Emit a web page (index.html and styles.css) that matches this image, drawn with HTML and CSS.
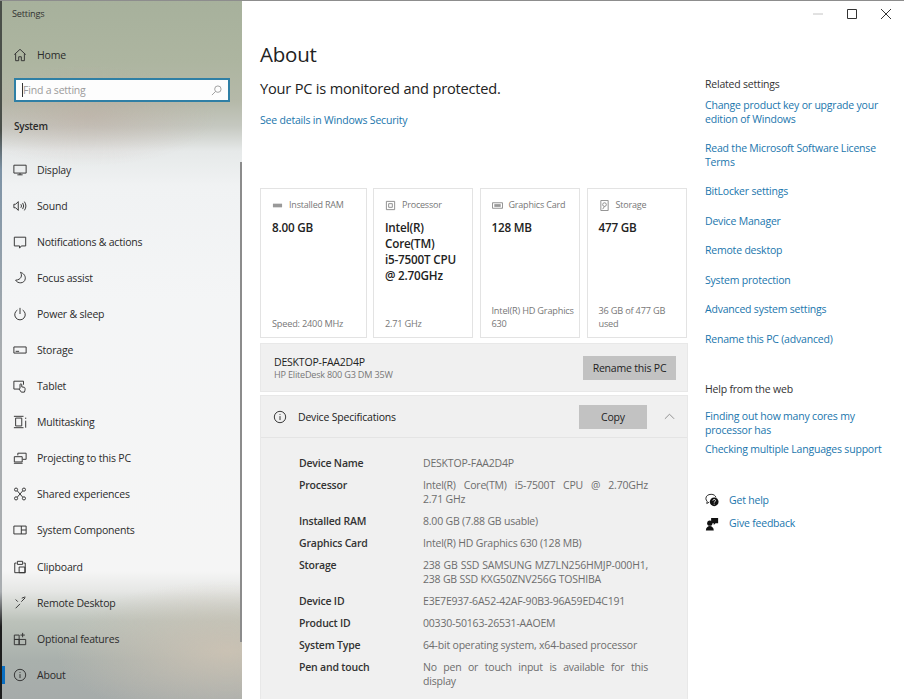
FILE: index.html

```html
<!DOCTYPE html>
<html lang="en">
<head>
  <meta charset="UTF-8" />
  <title>Settings - About</title>
  <link rel="stylesheet" href="styles.css">
</head>
<body>
  <div class="window">
    <aside class="sidebar">
      <div class="app-title">Settings</div>
      <a class="home">
        <svg class="icon" viewBox="0 0 16 16"><path d="M1.500 7.500 8 1.500l6.500 6M3 6.500v8h3.500v-4.500h3v4.500H13v-8"/></svg>
        <span>Home</span>
      </a>
      <div class="search">
        <span class="caret"></span><span class="search-text">Find a setting</span>
        <svg class="search-icon" viewBox="0 0 12 12"><circle cx="7.500" cy="4.500" r="3.500"/><path d="M5 7 1 11"/></svg>
      </div>
      <div class="section">System</div>
      <nav class="nav">
        <a class="nav-item"><svg class="icon" viewBox="0 0 16 16"><path d="M1 2.500h14v9H1zM5 13.500h6M8 11.500v2" /></svg><span>Display</span></a>
        <a class="nav-item"><svg class="icon" viewBox="0 0 16 16"><path d="M1 6v4h2l3 3V3L3 6zM9 6q1.500 2 0 4M11 4.500q2.500 3.500 0 7M13 3q3.500 5 0 10"/></svg><span>Sound</span></a>
        <a class="nav-item"><svg class="icon" viewBox="0 0 16 16"><path d="M1.500 2.500h13v10H9.500L7.500 15v-2.500h-6z"/></svg><span>Notifications &amp; actions</span></a>
        <a class="nav-item"><svg class="icon" viewBox="0 0 16 16"><path d="M8.500 1.500C11 5 9.500 10 3 10.500c2 4 10 4.500 11-1.500.500-3.500-2-6.500-5.500-7.500z"/></svg><span>Focus assist</span></a>
        <a class="nav-item"><svg class="icon" viewBox="0 0 16 16"><path d="M5 3.500a6 6 0 1 0 6 0M8 1v7"/></svg><span>Power &amp; sleep</span></a>
        <a class="nav-item"><svg class="icon" viewBox="0 0 16 16"><path d="M1 4.500h14v7H1zM3 9.500h4"/></svg><span>Storage</span></a>
        <a class="nav-item"><svg class="icon" viewBox="0 0 16 16"><path d="M7 11.500H1v-9h11v4"/><path d="M8 8V6.500a1 1 0 0 1 2 0V9l3 .5c1 .5 1 2.500.5 4l-.5 1.500H9.500L7 11.500 8 10.500z"/></svg><span>Tablet</span></a>
        <a class="nav-item"><svg class="icon" viewBox="0 0 16 16"><path d="M3 3.500h7v9H3zM1 1.500h11M1 14.500h11M14.500 3v1.500M14.500 6.500v8"/></svg><span>Multitasking</span></a>
        <a class="nav-item"><svg class="icon" viewBox="0 0 16 16"><path d="M5.500 5V2.500h9.500v7h-4"/><path d="M1.500 6.500h9v6h-9zM1 14h10"/></svg><span>Projecting to this PC</span></a>
        <a class="nav-item"><svg class="icon" viewBox="0 0 16 16"><circle cx="3.500" cy="3" r="1.800"/><circle cx="12.500" cy="3" r="1.800"/><circle cx="3.500" cy="13" r="1.800"/><circle cx="12.500" cy="13" r="1.800"/><path d="M5 4.500 11 11.500M11 4.500 5 11.500"/></svg><span>Shared experiences</span></a>
        <a class="nav-item"><svg class="icon" viewBox="0 0 16 16"><path d="M1 3.500h14v9H1zM9.500 3.500v9M9.500 8H15"/></svg><span>System Components</span></a>
        <a class="nav-item"><svg class="icon" viewBox="0 0 16 16"><path d="M4 3.500H2v11h12v-11h-2M7 8h6.500v6.500H7zM5 5V1.500h6V5z"/></svg><span>Clipboard</span></a>
        <a class="nav-item"><svg class="icon" viewBox="0 0 16 16"><path d="M3 14l5-5M9.500 6.500 14 2M10 2.500 14 1M3 4l2.500 2.500"/></svg><span>Remote Desktop</span></a>
        <a class="nav-item"><svg class="icon" viewBox="0 0 16 16"><path d="M1.500 3.500h5.500v5H1.500zM1.500 8.500h5.500v6H1.500zM7 8.500h7.500v6H7zM11 1v5M8.500 3.500h5"/></svg><span>Optional features</span></a>
        <a class="nav-item active"><svg class="icon" viewBox="0 0 16 16"><circle cx="8" cy="8" r="6.500"/><path d="M8 7v4.500M8 4.500v1"/></svg><span>About</span></a>
      </nav>
      <div class="scrollbar"></div>
    </aside>

    <main class="main">
      <div class="controls">
        <svg class="minimize" viewBox="0 0 10 10"><path d="M0 5h10"/></svg>
        <svg viewBox="0 0 10 10"><path d="M.5.5h9v9h-9z"/></svg>
        <svg viewBox="0 0 10 10"><path d="M0 0l10 10M10 0 0 10"/></svg>
      </div>
      <div class="columns">
        <section class="content">
          <h1>About</h1>
          <h2>Your PC is monitored and protected.</h2>
          <a class="link security">See details in Windows Security</a>

          <div class="cards">
            <div class="card c1">
              <div class="card-head"><svg viewBox="0 0 12 12"><path class="fill" d="M1 4h10v4H1z"/></svg>Installed RAM</div>
              <div class="card-value">8.00 GB</div>
              <div class="card-foot">Speed: 2400 MHz</div>
            </div>
            <div class="card c2">
              <div class="card-head"><svg viewBox="0 0 12 12"><path d="M1.500 1.500h9v9h-9zM4 4h4v4H4z"/></svg>Processor</div>
              <div class="card-value"><div>Intel(R)</div><div>Core(TM)</div><div>i5-7500T CPU</div><div>@ 2.70GHz</div></div>
              <div class="card-foot">2.71 GHz</div>
            </div>
            <div class="card c3">
              <div class="card-head"><svg viewBox="0 0 12 12"><path d="M.5 3h11v6H.5z"/><path class="fill" d="M2.500 4.500h7v3h-7z"/></svg>Graphics Card</div>
              <div class="card-value">128 MB</div>
              <div class="card-foot">Intel(R) HD Graphics 630</div>
            </div>
            <div class="card c4">
              <div class="card-head"><svg viewBox="0 0 12 12"><path d="M2 .5h8v11H2z"/><circle cx="6" cy="5" r="2"/><path d="M4 10l2-3"/></svg>Storage</div>
              <div class="card-value">477 GB</div>
              <div class="card-foot">36 GB of 477 GB used</div>
            </div>
          </div>

          <div class="pc-bar">
            <div>
              <div class="pc-name">DESKTOP-FAA2D4P</div>
              <div class="pc-model">HP EliteDesk 800 G3 DM 35W</div>
            </div>
            <button class="btn rename">Rename this PC</button>
          </div>

          <div class="specs">
            <div class="specs-head">
              <svg class="info" viewBox="0 0 16 16"><circle cx="8" cy="8" r="6.500"/><path d="M8 7v4.500M8 4.500v1"/></svg>
              <span class="specs-title">Device Specifications</span>
              <button class="btn copy">Copy</button>
              <svg class="chevron" viewBox="0 0 12 7"><path d="M1 6l5-5 5 5"/></svg>
            </div>
            <dl class="spec-list">
              <dt>Device Name</dt><dd>DESKTOP-FAA2D4P</dd>
              <dt>Processor</dt><dd><span class="just-line">Intel(R) Core(TM) i5-7500T CPU @ 2.70GHz</span>2.71 GHz</dd>
              <dt>Installed RAM</dt><dd>8.00 GB (7.88 GB usable)</dd>
              <dt>Graphics Card</dt><dd>Intel(R) HD Graphics 630 (128 MB)</dd>
              <dt>Storage</dt><dd class="just">238 GB SSD SAMSUNG MZ7LN256HMJP-000H1, 238 GB SSD KXG50ZNV256G TOSHIBA</dd>
              <dt>Device ID</dt><dd>E3E7E937-6A52-42AF-90B3-96A59ED4C191</dd>
              <dt>Product ID</dt><dd>00330-50163-26531-AAOEM</dd>
              <dt>System Type</dt><dd>64-bit operating system, x64-based processor</dd>
              <dt>Pen and touch</dt><dd class="just">No pen or touch input is available for this display</dd>
            </dl>
          </div>
        </section>

        <aside class="related">
          <h3>Related settings</h3>
          <div class="rel-group">
            <a class="link">Change product key or upgrade your edition of Windows</a>
            <a class="link">Read the Microsoft Software License Terms</a>
            <a class="link">BitLocker settings</a>
            <a class="link">Device Manager</a>
            <a class="link">Remote desktop</a>
            <a class="link">System protection</a>
            <a class="link">Advanced system settings</a>
            <a class="link">Rename this PC (advanced)</a>
          </div>
          <h3 class="web">Help from the web</h3>
          <div class="rel-group web-group">
            <a class="link">Finding out how many cores my processor has</a>
            <a class="link">Checking multiple Languages support</a>
          </div>
          <div class="help">
            <a class="link help-row">
              <svg viewBox="0 0 16 16"><path d="M7 1.500c-3.500 0-6 2-6 4.800 0 1.300.6 2.400 1.500 3.200L2 12l2.800-1.500"/><path d="M7 1.500c3 0 5 1.500 5.500 3.500"/><circle class="fill" cx="10.500" cy="10" r="5"/><path class="mark" d="M9 8.800c0-2 3-2 3 0 0 1-1.500 1-1.500 2.200M10.500 12.200v1"/></svg>
              Get help
            </a>
            <a class="link help-row">
              <svg viewBox="0 0 16 16"><circle class="fill" cx="5.500" cy="7" r="3"/><path class="fill" d="M1 15.500c0-7 9-7 9 0z"/><path class="fill" d="M7 1h8v6h-3l-2 2V7H7z"/></svg>
              Give feedback
            </a>
          </div>
        </aside>
      </div>
    </main>
  </div>
</body>
</html>
```

FILE: styles.css

```css
* { box-sizing: border-box; }
html, body { margin: 0; padding: 0; height: 100%; overflow: hidden; }
body { font-family: "Open Sans", "Noto Sans", Arial, sans-serif; font-size: 10.5px; letter-spacing: -0.2px; color: #222; background: #fff; }
.window { display: flex; width: 904px; height: 699px; border-top: 1px solid #8d8d8d; overflow: hidden; }

/* sidebar */
.sidebar {
  position: relative; width: 242px; flex: none; border-left: 2px solid; color: #2b2b2b;
  border-image: linear-gradient(180deg, #4a4f49 0, #4a4f49 130px, #7d93a6 170px, #a9adb0 350px, #a9adb0 590px, #1d1d1d 625px, #1d1d1d 100%) 1;
  background:
    radial-gradient(ellipse 130px 50px at 85px 115px, rgba(190,165,155,0.4), rgba(190,165,155,0) 100%),
    radial-gradient(ellipse 170px 70px at 225px 650px, rgba(205,195,180,0.9), rgba(205,195,180,0) 100%),
    linear-gradient(180deg, #a7b19c 0, #adb5a0 60px, #b5b9a9 100px, #c5c8c0 125px, #e6e9e9 150px, #f0f2f3 185px, #f4f5f6 300px, #f5f5f5 570px, #e6e7e5 590px, #bcc2ba 620px, #a9b0ac 660px, #a6abaa 699px);
}
.app-title { padding: 7px 0 0 10px; font-size: 9.2px; line-height: 12px; height: 44px; color: #333; }
.home { display: flex; align-items: center; gap: 10px; height: 20px; padding-left: 11px; }
.icon { width: 14px; height: 14px; flex: none; fill: none; stroke: #333; stroke-width: 1.1; }
.search { display: flex; align-items: center; height: 24px; margin: 13px 0 0 12px; width: 216px; border: 2px solid #2f7fa5; background: #fdfdfd; padding: 0 6px; color: #9b9b9b; }
.caret { width: 1px; height: 14px; background: #333; }
.search-text { flex: 1; }
.search-icon { width: 11px; height: 11px; fill: none; stroke: #999; }
.section { margin: 16px 0 0 12px; font-size: 10px; font-weight: 600; line-height: 16px; height: 16px; }
.nav { margin-top: 17.5px; }
.nav-item { display: flex; align-items: center; gap: 10px; height: 36.1px; padding-left: 11px; position: relative; }
.nav-item.active::before { content: ""; position: absolute; left: 0; top: 9px; width: 3px; height: 18px; background: #0a6fc2; }
.scrollbar { position: absolute; top: 161px; right: 0; width: 2px; height: 480px; background: #8c8c8c; }

/* main */
.main { flex: 1; min-width: 0; }
.controls { display: flex; justify-content: flex-end; align-items: center; gap: 24px; height: 25px; padding-right: 13px; }
.controls svg { width: 10px; height: 10px; fill: none; stroke: #333; stroke-width: 1; }
.controls .minimize { stroke: #c4c4c4; }
.columns { display: flex; }
.content { width: 428px; margin-left: 18px; flex: none; }
h1 { margin: 13px 0 0; font-size: 20.5px; font-weight: 400; line-height: 30px; color: #222; }
h2 { margin: 7px 0 0; font-size: 14.6px; font-weight: 400; line-height: 24px; color: #222; }
.link { color: #1a76ad; display: block; }
.security { margin-top: 12px; line-height: 16px; }

.cards { display: flex; gap: 6.5px; margin-top: 60px; }
.card { height: 150px; background: #fff; border: 1px solid #e3e3e3; padding: 9px 2px 7px 11px; display: flex; flex-direction: column; }
.c1 { width: 106.5px; }
.c2 { width: 100px; }
.c3 { width: 100.5px; }
.c4 { width: 100.5px; padding-right: 6px; }
.card-head { display: flex; align-items: center; gap: 5px; color: #777; font-size: 9px; line-height: 14px; }
.card-head svg { width: 11px; height: 11px; flex: none; fill: none; stroke: #888; margin-right: 1px; }
.card-head .fill { fill: #999; stroke: none; }
.card-value { margin-top: 7px; font-size: 11.7px; font-weight: 600; line-height: 16px; color: #222; flex: 1; }
.card-foot { color: #777; font-size: 9.2px; line-height: 12.5px; }

.pc-bar { display: flex; justify-content: space-between; align-items: center; height: 49px; margin-top: 5px; background: #f0f0f0; border: 1px solid #e8e8e8; padding: 0 11px 0 13px; }
.pc-name { font-size: 10.5px; line-height: 14px; color: #222; }
.pc-model { font-size: 9.1px; line-height: 12px; color: #777; }
.btn { border: 0; background: #c2c2c2; color: #222; font-family: inherit; font-size: 10.5px; letter-spacing: inherit; padding: 0; }
.rename { width: 93px; height: 24px; }

.specs { margin-top: 3px; height: 320px; background: #f0f0f0; border: 1px solid #e8e8e8; }
.specs-head { display: flex; align-items: center; height: 42px; padding-left: 12px; border-bottom: 1px solid #e4e4e4; }
.info { width: 14px; height: 14px; fill: none; stroke: #333; stroke-width: 1.1; flex: none; }
.specs-title { margin-left: 11px; flex: 1; }
.copy { width: 68px; height: 24px; }
.chevron { width: 11px; height: 7px; margin: 0 12px 0 17px; fill: none; stroke: #888; }
.spec-list { display: grid; grid-template-columns: 124px 225px; row-gap: 8px; margin: 18px 0 0 38px; line-height: 14px; }
.spec-list dt { font-weight: 600; color: #333; }
.spec-list dd { margin: 0; color: #6d6d6d; }
.just { text-align: justify; }
.just-line { display: block; text-align: justify; text-align-last: justify; }

/* right column */
.related { margin-left: 17px; width: 185px; flex: none; line-height: 13.5px; }
h3 { margin: 50px 0 0; font-size: 10.5px; font-weight: 400; line-height: 16px; color: #333; }
.rel-group { display: flex; flex-direction: column; gap: 16px; margin-top: 7px; }
h3.web { margin-top: 35px; }
.web-group { gap: 5.5px; margin-top: 13px; }
.help { margin-top: 32.5px; }
.help-row { display: flex; align-items: center; gap: 10px; height: 23.5px; }
.help-row svg { width: 14px; height: 14px; flex: none; fill: none; stroke: #111; }
.help-row .fill { fill: #111; stroke: none; }
.help-row .mark { stroke: #fff; }
```
